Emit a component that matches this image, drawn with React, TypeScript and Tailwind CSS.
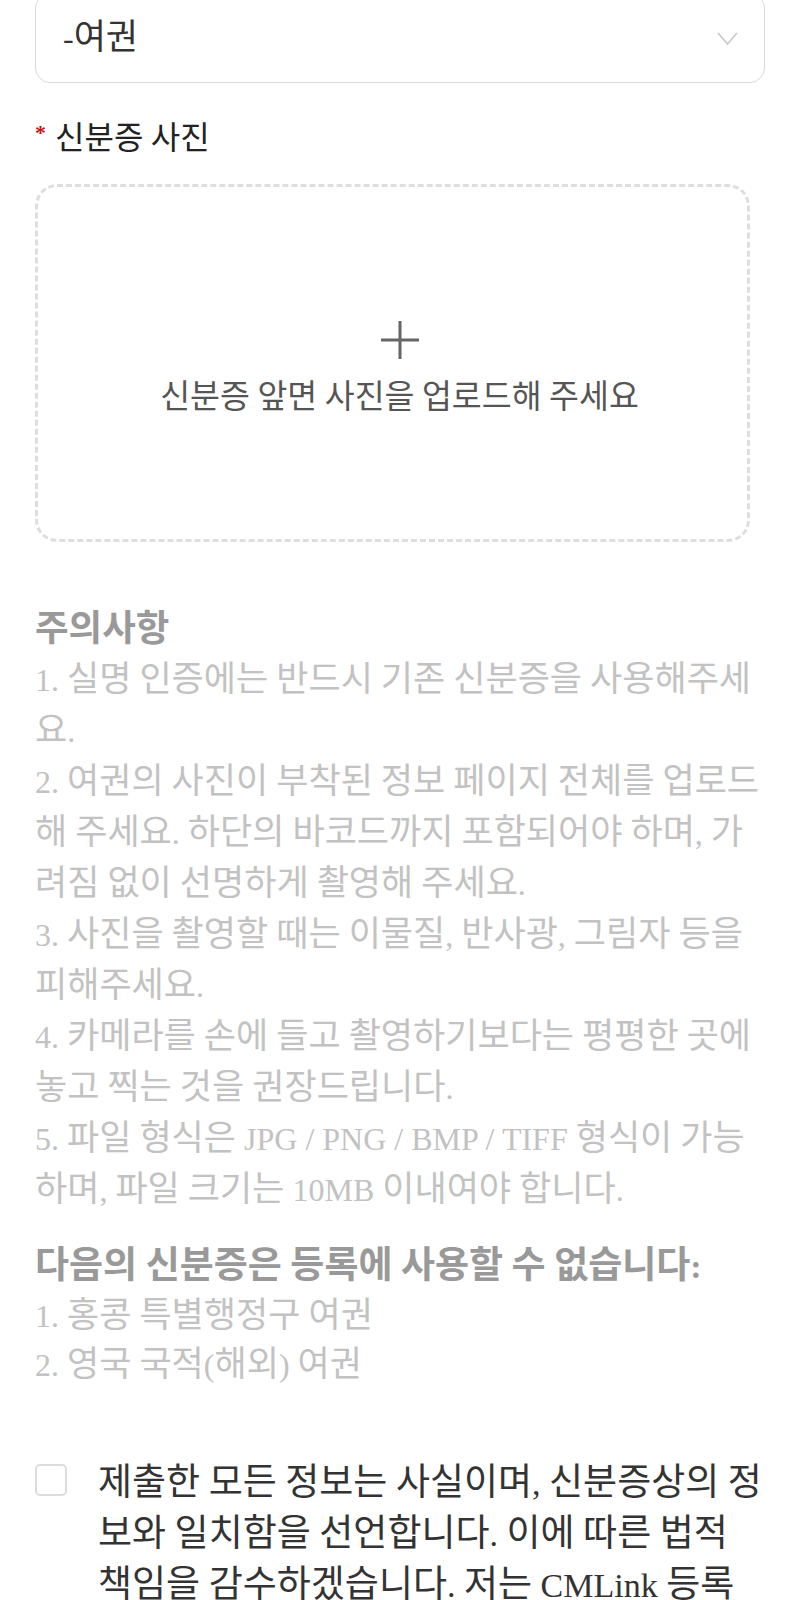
import React from 'react';

const notices = [
  '1. 실명 인증에는 반드시 기존 신분증을 사용해주세요.',
  '2. 여권의 사진이 부착된 정보 페이지 전체를 업로드해 주세요. 하단의 바코드까지 포함되어야 하며, 가려짐 없이 선명하게 촬영해 주세요.',
  '3. 사진을 촬영할 때는 이물질, 반사광, 그림자 등을 피해주세요.',
  '4. 카메라를 손에 들고 촬영하기보다는 평평한 곳에 놓고 찍는 것을 권장드립니다.',
  '5. 파일 형식은 JPG / PNG / BMP / TIFF 형식이 가능하며, 파일 크기는 10MB 이내여야 합니다.',
];

const notAccepted = ['1. 홍콩 특별행정구 여권', '2. 영국 국적(해외) 여권'];

function Ko({ text, cls }: { text: string; cls: string }) {
  return (
    <>
      {text.split(/([\uAC00-\uD7A3])/).map((part, i) =>
        i % 2 ? (
          <span key={i} className={cls}>
            {part}
          </span>
        ) : (
          part
        ),
      )}
    </>
  );
}

export default function App() {
  return (
    <div className="min-h-screen bg-white px-[35px] pb-[200px] font-['Liberation_Serif','Noto_Sans_CJK_KR',serif]">
      {/* document type select */}
      <div className="-mt-[7px] flex h-[90px] items-center justify-between rounded-[15px] border border-[#d9d9d9] pl-[27px] pr-[26px]">
        <span className="text-[32px] text-[#333]">
          <Ko text="-여권" cls="text-[35px] leading-none" />
        </span>
        <svg width="21" height="13" viewBox="0 0 21 13" fill="none" stroke="#c8c8c8" strokeWidth="1.6">
          <path d="M1 1l9.5 11L20 1" />
        </svg>
      </div>

      <div className="mt-[30px] flex items-start text-[30px] leading-[51px] text-[#222]">
        <span className="mr-[9px] text-[22px] font-bold leading-[40px] text-[#c8161d]">*</span>
        <span>
          <Ko text="신분증 사진" cls="text-[32px] leading-none" />
        </span>
      </div>

      {/* upload box */}
      <div className="mt-[20px] flex h-[358px] w-[715px] flex-col items-center justify-center rounded-[22px] border-[3px] border-dashed border-[#dedede] pl-[14px] pt-[18px]">
        <svg width="38" height="38" viewBox="0 0 38 38" stroke="#666" strokeWidth="3">
          <path d="M19 0v38M0 19h38" />
        </svg>
        <p className="mt-[13px] text-[30px] leading-[51px] text-[#555]">
          <Ko text="신분증 앞면 사진을 업로드해 주세요" cls="text-[32.5px] leading-none" />
        </p>
      </div>

      {/* notice */}
      <div className="mt-[62px]">
        <h3 className="text-[34px] font-bold leading-[51px] text-[#999]">
          <Ko text="주의사항" cls="text-[36.5px] leading-none" />
        </h3>
        <ul className="text-[32px] leading-[51px] text-[#c2c2c2]">
          {notices.map((n) => (
            <li key={n}>
              <Ko text={n} cls="text-[35px] leading-none" />
            </li>
          ))}
        </ul>
        <h3 className="mt-[25px] text-[34px] font-bold leading-[51px] text-[#999]">
          <Ko text="다음의 신분증은 등록에 사용할 수 없습니다:" cls="text-[37px] leading-none" />
        </h3>
        <ul className="text-[32px] leading-[49px] text-[#c2c2c2]">
          {notAccepted.map((n) => (
            <li key={n}>
              <Ko text={n} cls="text-[35px] leading-none" />
            </li>
          ))}
        </ul>
      </div>

      {/* declaration */}
      <label className="mt-[68px] flex items-start gap-[31px]">
        <span className="mt-[6px] h-[32px] w-[32px] shrink-0 rounded-[5px] border-2 border-[#dcdcdc] bg-white" />
        <span className="text-[34px] leading-[51px] text-[#333]">
          <Ko
            text="제출한 모든 정보는 사실이며, 신분증상의 정보와 일치함을 선언합니다. 이에 따른 법적 책임을 감수하겠습니다. 저는 CMLink 등록 약관 및 개인정보 처리방침을 읽었으며 이에 동의합니다."
            cls="text-[37px] leading-none"
          />
        </span>
      </label>
    </div>
  );
}
